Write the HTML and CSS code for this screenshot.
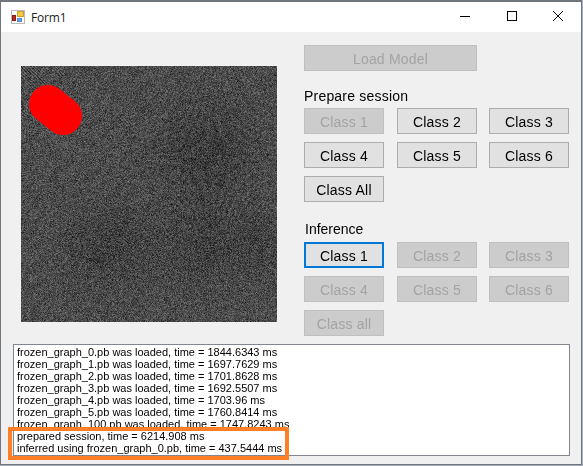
FILE: index.html
```html
<!DOCTYPE html>
<html lang="en">
<head>
  <meta charset="UTF-8">
  <title>Form1</title>
  <link rel="stylesheet" href="styles.css">
</head>
<body>
  <div class="window">
    <!-- Title bar -->
    <header class="titlebar">
      <svg class="app-icon" width="14" height="14" viewBox="0 0 14 14">
        <rect x="0.5" y="0.5" width="13" height="13" fill="#fff" stroke="#bbb"/>
        <rect x="6.5" y="1.5" width="6" height="5" fill="#f8c93c" stroke="#c9a030"/>
        <rect x="1.5" y="5.5" width="3" height="5" fill="#c4281c" stroke="#8a2015"/>
        <rect x="6.5" y="8.5" width="4" height="3" fill="#6aa0e8" stroke="#5a88d0"/>
      </svg>
      <span class="title">Form1</span>
      <div class="caption-buttons">
        <svg width="46" height="32" viewBox="0 0 46 32"><path d="M17 16.5H27" stroke="#000"/></svg>
        <svg width="46" height="32" viewBox="0 0 46 32"><rect x="18.5" y="11.5" width="9" height="9" fill="none" stroke="#000"/></svg>
        <svg width="46" height="32" viewBox="0 0 46 32"><path d="M18 11L28 21M28 11L18 21" stroke="#000"/></svg>
      </div>
    </header>

    <main class="client">
      <div class="top">
        <canvas id="preview" class="preview" width="256" height="256"></canvas>

        <section class="controls">
          <button class="btn btn-wide" disabled>Load Model</button>

          <div class="group-label">Prepare session</div>
          <div class="btn-grid">
            <button class="btn" disabled>Class 1</button>
            <button class="btn">Class 2</button>
            <button class="btn">Class 3</button>
            <button class="btn">Class 4</button>
            <button class="btn">Class 5</button>
            <button class="btn">Class 6</button>
            <button class="btn">Class All</button>
          </div>

          <div class="group-label group-inference">Inference</div>
          <div class="btn-grid">
            <button class="btn btn-focus">Class 1</button>
            <button class="btn" disabled>Class 2</button>
            <button class="btn" disabled>Class 3</button>
            <button class="btn" disabled>Class 4</button>
            <button class="btn" disabled>Class 5</button>
            <button class="btn" disabled>Class 6</button>
            <button class="btn" disabled>Class all</button>
          </div>
        </section>
      </div>

      <div class="log">
        <div>frozen_graph_0.pb was loaded, time = 1844.6343 ms</div>
        <div>frozen_graph_1.pb was loaded, time = 1697.7629 ms</div>
        <div>frozen_graph_2.pb was loaded, time = 1701.8628 ms</div>
        <div>frozen_graph_3.pb was loaded, time = 1692.5507 ms</div>
        <div>frozen_graph_4.pb was loaded, time = 1703.96 ms</div>
        <div>frozen_graph_5.pb was loaded, time = 1760.8414 ms</div>
        <div>frozen_graph_100.pb was loaded, time = 1747.8243 ms</div>
        <div>prepared session, time = 6214.908 ms</div>
        <div>inferred using frozen_graph_0.pb, time = 437.5444 ms</div>
      </div>
    </main>

    <!-- Highlight drawn over the screenshot -->
    <div class="highlight"></div>
  </div>
  <script src="app.js"></script>
</body>
</html>
```

FILE: styles.css
```css
* { box-sizing: border-box; }
html, body { margin: 0; height: 100%; background-color: #a9b0bc; overflow: hidden; }
body { font-family: "Liberation Sans", Arial, sans-serif; font-size: 12px; color: #000; }

.window { position: relative; width: 582px; height: 465px; display: flex; flex-direction: column; border: 1px solid #70757c; border-top-width: 2px; background-color: #f0f0f0; }

.titlebar { height: 30px; flex: none; display: flex; align-items: center; padding-left: 10px; background-color: #fff; }
.app-icon { flex: none; }
.title { margin-left: 6px; font-family: "Open Sans", sans-serif; font-size: 12px; letter-spacing: -0.2px; color: #222; }
.caption-buttons { margin-left: auto; display: flex; margin-top: -2px; }

.client { flex: 1; display: flex; flex-direction: column; padding: 0 11px 8px 12px; }
.top { flex: 1; display: flex; }
.preview { width: 256px; height: 256px; margin: 34px 0 0 8px; }

.controls { margin: 13px 0 0 27px; }
.group-label { height: 16px; margin: 17px 0 4px; font-size: 14px; line-height: 16px; letter-spacing: 0.2px; }
.group-inference { margin: 19px 0 5px 1px; font-size: 14px; letter-spacing: 0; }

.btn-grid { display: grid; grid-template-columns: 93px 92px 80px; row-gap: 8px; }
.btn { display: block; width: 80px; height: 26px; padding: 1px 0 0; border: 1px solid #adadad; border-radius: 0; background-color: #e1e1e1; color: #000; font-family: "Liberation Sans", Arial, sans-serif; font-size: 14px; letter-spacing: 0.2px; }
.btn:disabled { background-color: #cccccc; border-color: #bfbfbf; color: #a3a3a3; }
.btn-wide { width: 173px; }
.btn-focus { border: 2px solid #0078d7; }

.log { height: 112px; padding: 1px 3px; border: 1px solid #82878f; background-color: #fff; font-size: 11px; line-height: 12px; white-space: nowrap; overflow: hidden; }

.highlight { position: absolute; left: 7px; top: 425px; width: 281px; height: 33px; border: 4px solid #ff7f27; }
```

FILE: app.js
```js
// Draw the noisy preview picture with the red blob on top
const canvas = document.getElementById('preview');
const ctx = canvas.getContext('2d');
const image = ctx.createImageData(256, 256);

let seed = 12345;
function rand() {
  seed = (seed * 1664525 + 1013904223) % 4294967296;
  return seed / 4294967296;
}

// dark smudge centred on (cx, cy)
function smudge(x, y, cx, cy, r) {
  const d = ((x - cx) * (x - cx) + (y - cy) * (y - cy)) / (r * r);
  return Math.exp(-d);
}

for (let y = 0; y < 256; y++) {
  for (let x = 0; x < 256; x++) {
    const noise = (rand() + rand() + rand() - 1.5) * 36;
    // fine diagonal streaks, strongest in the top left corner
    const streak = Math.sin((x - y) * 1.9) * 38 * Math.exp(-(x + y) / 28)
      + Math.sin((x + y * 0.8) * 0.35) * 4 * Math.exp(-(x + y) / 220);
    const grid = Math.sin((x - 190) * (y - 90) * 0.02) * 5;
    let v = 76 + noise + streak + grid;
    v -= 16 * smudge(x, y, 185, 85, 45);
    v -= 14 * smudge(x, y, 85, 180, 40);
    v -= 12 * smudge(x, y, 180, 180, 40);
    v -= 10 * smudge(x, y, 240, 175, 30);
    const i = (y * 256 + x) * 4;
    image.data[i] = v;
    image.data[i + 1] = v;
    image.data[i + 2] = v;
    image.data[i + 3] = 255;
  }
}
ctx.putImageData(image, 0, 0);

ctx.strokeStyle = '#ff0000';
ctx.lineCap = 'round';
ctx.lineWidth = 38;
ctx.beginPath();
ctx.moveTo(27, 38);
ctx.lineTo(42, 50);
ctx.stroke();
```
